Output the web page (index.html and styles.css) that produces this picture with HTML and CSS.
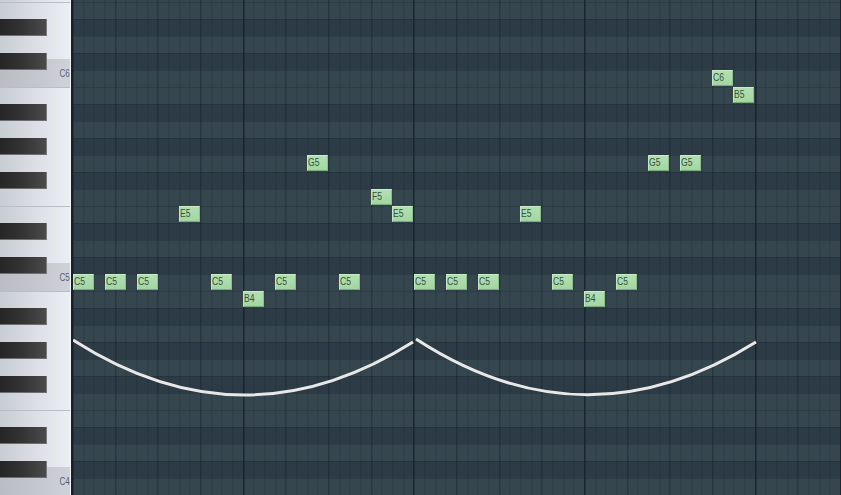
FILE: index.html
```html
<!DOCTYPE html>
<html>
<head>
<meta charset="utf-8">
<link rel="stylesheet" href="styles.css">
</head>
<body>
<div class="roll">
  <div class="keys">
    <div class="whites">
      <div class="wk l"></div>
      <div class="wk s e"></div>
      <div class="wk s"></div>
      <div class="wk s c"><span class="lbl">C6</span></div>
      <div class="wk l bk"></div>
      <div class="wk l"></div>
      <div class="wk l"></div>
      <div class="wk l"></div>
      <div class="wk s e"></div>
      <div class="wk s"></div>
      <div class="wk s c"><span class="lbl">C5</span></div>
      <div class="wk l bk"></div>
      <div class="wk l"></div>
      <div class="wk l"></div>
      <div class="wk l"></div>
      <div class="wk s e"></div>
      <div class="wk s"></div>
      <div class="wk s c"><span class="lbl">C4</span></div>
    </div>
    <div class="blacks">
      <div class="row"></div>
      <div class="row"></div>
      <div class="row b"></div>
      <div class="row"></div>
      <div class="row b"></div>
      <div class="row"></div>
      <div class="row"></div>
      <div class="row b"></div>
      <div class="row"></div>
      <div class="row b"></div>
      <div class="row"></div>
      <div class="row b"></div>
      <div class="row"></div>
      <div class="row"></div>
      <div class="row b"></div>
      <div class="row"></div>
      <div class="row b"></div>
      <div class="row"></div>
      <div class="row"></div>
      <div class="row b"></div>
      <div class="row"></div>
      <div class="row b"></div>
      <div class="row"></div>
      <div class="row b"></div>
      <div class="row"></div>
      <div class="row"></div>
      <div class="row b"></div>
      <div class="row"></div>
      <div class="row b"></div>
      <div class="row"></div>
    </div>
  </div>
  <div class="grid">
    <div class="note" style="left:0px;top:274px"><span>C5</span></div>
    <div class="note" style="left:32px;top:274px"><span>C5</span></div>
    <div class="note" style="left:64px;top:274px"><span>C5</span></div>
    <div class="note" style="left:106px;top:206px"><span>E5</span></div>
    <div class="note" style="left:138px;top:274px"><span>C5</span></div>
    <div class="note" style="left:170px;top:291px"><span>B4</span></div>
    <div class="note" style="left:202px;top:274px"><span>C5</span></div>
    <div class="note" style="left:234px;top:155px"><span>G5</span></div>
    <div class="note" style="left:266px;top:274px"><span>C5</span></div>
    <div class="note" style="left:298px;top:189px"><span>F5</span></div>
    <div class="note" style="left:319px;top:206px"><span>E5</span></div>
    <div class="note" style="left:341px;top:274px"><span>C5</span></div>
    <div class="note" style="left:373px;top:274px"><span>C5</span></div>
    <div class="note" style="left:405px;top:274px"><span>C5</span></div>
    <div class="note" style="left:447px;top:206px"><span>E5</span></div>
    <div class="note" style="left:479px;top:274px"><span>C5</span></div>
    <div class="note" style="left:511px;top:291px"><span>B4</span></div>
    <div class="note" style="left:543px;top:274px"><span>C5</span></div>
    <div class="note" style="left:575px;top:155px"><span>G5</span></div>
    <div class="note" style="left:607px;top:155px"><span>G5</span></div>
    <div class="note" style="left:639px;top:70px"><span>C6</span></div>
    <div class="note" style="left:660px;top:87px"><span>B5</span></div>
    <svg class="curve" width="768" height="495" viewBox="0 0 768 495">
      <path d="M0 340 Q170 449 340 342"/>
      <path d="M343 339 Q512 449 683 342"/>
    </svg>
  </div>
</div>
</body>
</html>
```
FILE: styles.css
```css
html, body {
  margin: 0;
  padding: 0;
  overflow: hidden;
  background: #2f3e48;
}

.roll {
  display: flex;
  width: 841px;
  height: 495px;
  overflow: hidden;
}

.keys {
  position: relative;
  flex: 0 0 70px;
  border-right: 1px solid #f2f4f7;
  box-shadow: 2px 0 0 #16212a;
  margin-right: 2px;
  overflow: hidden;
  background: linear-gradient(90deg, #c8ccd3 0%, #dde0e6 55%, #ebeef3 100%);
}

.whites {
  display: flex;
  flex-direction: column;
  margin-top: -27.75px;
}

.wk {
  flex: none;
  box-sizing: border-box;
  height: 29.75px;
}

.wk.s {
  height: 28.333px;
}

.wk.e,
.wk.bk {
  border-top: 1px solid #b9bdc4;
}

.wk.c {
  display: flex;
  align-items: center;
  justify-content: flex-end;
  padding: 2px 0 0 0;
  background: linear-gradient(90deg, #b9bdc3 0%, #c5c9cf 60%, #cfd3d9 100%);
}

.lbl {
  display: block;
  font-family: "Liberation Sans", Arial, sans-serif;
  font-size: 10px;
  line-height: 10px;
  color: #555e6d;
  transform: scaleX(0.8);
  transform-origin: right center;
}

.blacks {
  position: absolute;
  left: 0;
  top: -15px;
  width: 100%;
  display: flex;
  flex-direction: column;
}

.row {
  flex: none;
  height: 17px;
}

.row.b::before {
  content: "";
  display: block;
  box-sizing: border-box;
  width: 47px;
  height: 17px;
  background: linear-gradient(90deg, #262626 0%, #343434 50%, #4a4a4a 100%);
  border-right: 1px solid #777a7e;
  border-bottom: 1px solid #6b6e72;
}

.grid {
  position: relative;
  flex: 1;
  overflow: hidden;
  background:
    repeating-linear-gradient(90deg, #14202a 0 1px, transparent 1px 170.667px),
    repeating-linear-gradient(90deg, rgba(12, 22, 30, 0.3) 0 1px, transparent 1px 42.667px),
    repeating-linear-gradient(90deg, rgba(12, 22, 30, 0.2) 0 1px, transparent 1px 10.667px),
    linear-gradient(180deg, rgba(12, 22, 30, 0.2) 0 1px, transparent 1px 17px),
    linear-gradient(180deg,
      #35464f 0 17px,
      #2c3b45 17px 34px,
      #35464f 34px 51px,
      #2c3b45 51px 68px,
      #35464f 68px 85px,
      #2c3b45 85px 102px,
      #35464f 102px 136px,
      #2c3b45 136px 153px,
      #35464f 153px 170px,
      #2c3b45 170px 187px,
      #35464f 187px 204px);
  background-size: auto, auto, auto, 100% 17px, 100% 204px;
  background-position: -0.667px 0, -0.667px 0, -0.667px 0, 0 2px, 0 87px;
}

.note {
  position: absolute;
  box-sizing: border-box;
  width: 21px;
  height: 16px;
  background: linear-gradient(180deg, #b2dfb2 0%, #a3d6a3 100%);
  border-top: 1px solid #c8ecc8;
  border-left: 1px solid #c0e7c0;
  border-right: 1px solid #8ebd8e;
  border-bottom: 1px solid #78a878;
  overflow: hidden;
}

.note span {
  display: block;
  font-family: "Liberation Sans", Arial, sans-serif;
  font-size: 11px;
  line-height: 13px;
  height: 14px;
  color: #35523a;
  transform: scaleX(0.78);
  transform-origin: left center;
}

.curve {
  position: absolute;
  left: 0;
  top: 0;
}

.curve path {
  fill: none;
  stroke: #e8e8e8;
  stroke-width: 3;
}
```
